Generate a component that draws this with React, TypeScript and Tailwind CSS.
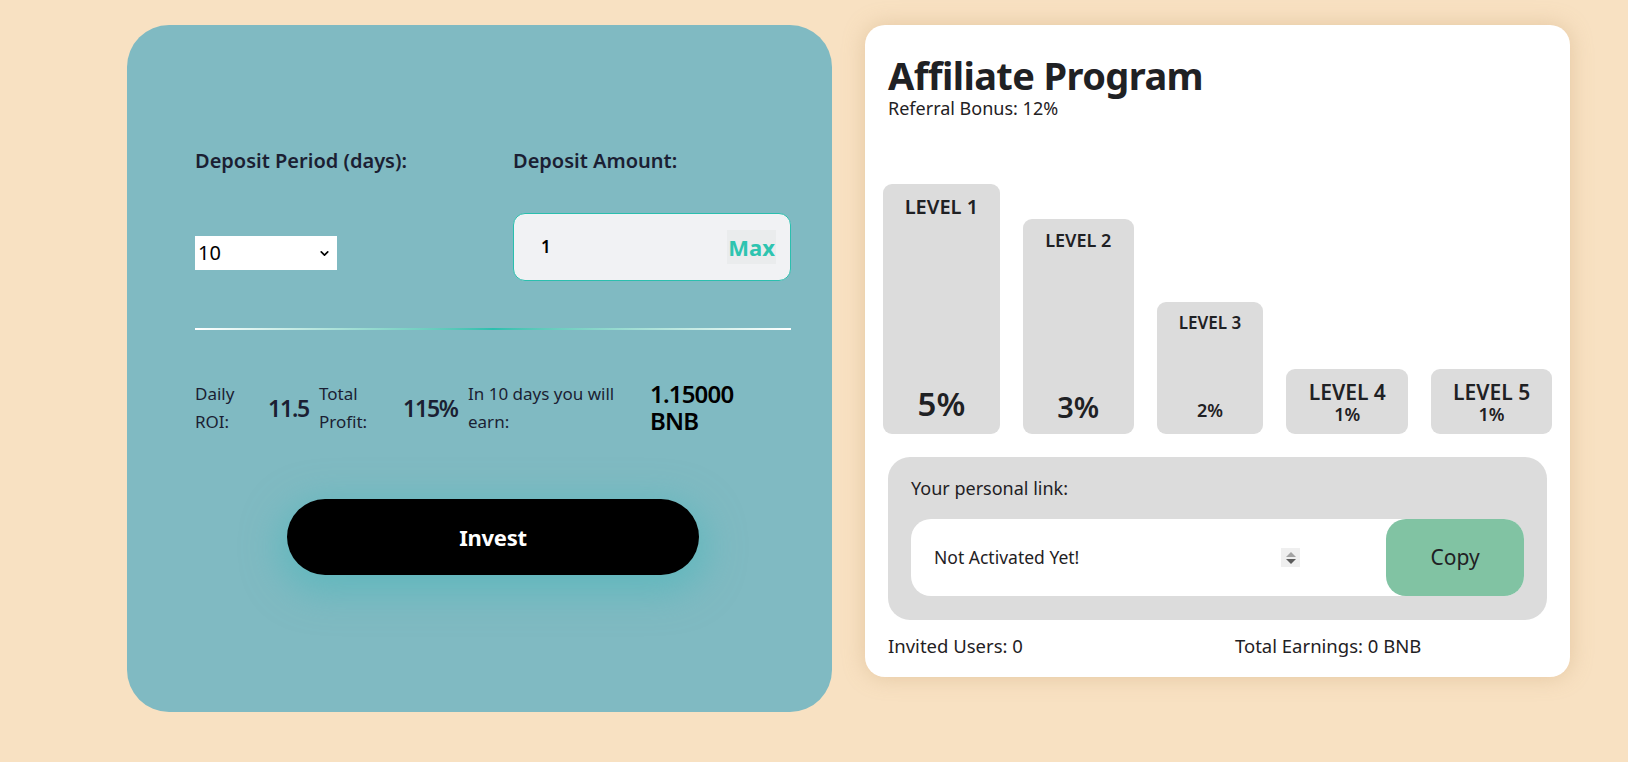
import { ChevronDown } from "lucide-react";

const font = { fontFamily: '"Noto Sans", Roboto, Arial, sans-serif' };

function Level({
  name,
  pct,
  className,
  nameClass,
  pctClass,
}: {
  name: string;
  pct: string;
  className: string;
  nameClass: string;
  pctClass: string;
}) {
  return (
    <div className={`flex flex-col items-center rounded-[9px] bg-[#dcdcdc] text-[#1f2124] ${className}`}>
      <span className={`font-semibold ${nameClass}`}>{name}</span>
      <span className={`font-semibold ${pctClass}`}>{pct}</span>
    </div>
  );
}

function Spinner() {
  return (
    <div className="flex h-[19px] w-[19px] flex-col items-center justify-center gap-[2px] bg-[#efefef]">
      <svg width="10" height="5" viewBox="0 0 10 5">
        <path d="M5 0 L10 5 L0 5 Z" fill="#a3a3a3" />
      </svg>
      <svg width="10" height="5" viewBox="0 0 10 5">
        <path d="M0 0 L10 0 L5 5 Z" fill="#5b5b5b" />
      </svg>
    </div>
  );
}

export default function App() {
  return (
    <div className="min-h-screen bg-[#f8e1c2] pl-[127px] pt-[25px]" style={font}>
      <div className="flex items-start gap-[33px]">
        {/* Invest calculator */}
        <div className="h-[687px] w-[705px] rounded-[42px] bg-[#80bac2] pl-[68px] pr-[41px] pt-[122px] text-[#1b1f33]">
          <div className="flex">
            <div className="w-[318px]">
              <p className="text-[20px] font-semibold leading-[27px]">Deposit Period (days):</p>
              <div className="relative mt-[62px] h-[34px] w-[142px] bg-white">
                <select className="h-full w-full appearance-none bg-transparent pl-[3px] text-[20px] text-black outline-none">
                  <option>10</option>
                  <option>20</option>
                  <option>30</option>
                </select>
                <ChevronDown
                  className="pointer-events-none absolute right-[6px] top-[11px] h-[13px] w-[13px] text-black"
                  strokeWidth={3}
                />
              </div>
            </div>
            <div className="w-[278px]">
              <p className="text-[20px] font-semibold leading-[27px]">Deposit Amount:</p>
              <div className="mt-[39px] flex h-[68px] items-center rounded-[12px] border border-[#2bbfae] bg-[#f1f2f4] pl-[27px] pr-[14px]">
                <span className="flex-1 text-[17px] font-semibold text-black">1</span>
                <span className="bg-[#eaeced] px-[1px] text-[22px] font-bold leading-[34px] text-[#2ec4b0]">Max</span>
              </div>
            </div>
          </div>

          <div className="mt-[47px] h-[2px] w-full bg-gradient-to-r from-white via-[#2bbfae] to-white" />

          <div className="mt-[50px] flex items-center text-[17px] leading-[28px]">
            <div className="w-[73px]">
              Daily
              <br />
              ROI:
            </div>
            <div className="w-[51px] text-[23px] font-semibold tracking-[-1.2px]">11.5</div>
            <div className="w-[84px]">
              Total
              <br />
              Profit:
            </div>
            <div className="w-[65px] text-[23px] font-semibold tracking-[-1.2px]">115%</div>
            <div className="w-[182px] whitespace-nowrap">
              In 10 days you will
              <br />
              earn:
            </div>
            <div className="self-start text-[24px] font-semibold leading-[27px] tracking-[-0.8px] text-black">
              1.15000
              <br />
              BNB
            </div>
          </div>

          <div className="mt-[63px] flex justify-center">
            <button className="h-[76px] w-[412px] rounded-full bg-black text-[22px] font-bold tracking-[-0.3px] text-white shadow-[0_10px_36px_8px_rgba(72,182,186,0.55)]">
              Invest
            </button>
          </div>
        </div>

        {/* Affiliate program */}
        <div className="h-[652px] w-[705px] rounded-[20px] bg-white px-[23px] pt-[26px] shadow-[0_0_22px_rgba(190,150,100,0.35)]">
          <h1 className="text-[38px] font-bold leading-[48px] tracking-[-0.6px] text-[#1f2124]">Affiliate Program</h1>
          <p className="text-[18px] leading-[18px] text-[#1f2124]">Referral Bonus: 12%</p>

          <div className="-mx-[5px] mt-[67px] flex h-[250px] items-end gap-[23px]">
            <Level
              name="LEVEL 1"
              pct="5%"
              className="h-[250px] w-[117px] justify-between pb-[6px] pt-[8px]"
              nameClass="text-[20px]"
              pctClass="text-[33px]"
            />
            <Level
              name="LEVEL 2"
              pct="3%"
              className="h-[215px] w-[111px] justify-between pb-[6px] pt-[8px]"
              nameClass="text-[18px]"
              pctClass="text-[29px]"
            />
            <Level
              name="LEVEL 3"
              pct="2%"
              className="h-[132px] w-[107px] justify-between pb-[10px] pt-[8px]"
              nameClass="text-[17px]"
              pctClass="text-[18px]"
            />
            <Level
              name="LEVEL 4"
              pct="1%"
              className="h-[65px] w-[122px] justify-center"
              nameClass="text-[21px] leading-[24px]"
              pctClass="text-[18px] leading-[20px]"
            />
            <Level
              name="LEVEL 5"
              pct="1%"
              className="h-[65px] w-[121px] justify-center"
              nameClass="text-[21px] leading-[24px]"
              pctClass="text-[18px] leading-[20px]"
            />
          </div>

          <div className="mt-[23px] h-[163px] rounded-[22px] bg-[#dcdcdc] px-[23px] pt-[19px]">
            <p className="text-[18px] leading-[24px] text-[#1f2124]">Your personal link:</p>
            <div className="mt-[19px] flex h-[77px] items-center rounded-[20px] bg-white">
              <div className="flex flex-1 items-center pl-[23px] pr-[86px]">
                <span className="flex-1 text-[17.5px] text-[#1f2124]">Not Activated Yet!</span>
                <Spinner />
              </div>
              <button className="h-full w-[138px] rounded-[20px] bg-[#81c3a3] text-[21px] text-[#1f2124]">Copy</button>
            </div>
          </div>

          <div className="mt-[12px] flex text-[18.5px] text-[#1f2124]">
            <span className="w-[347px]">Invited Users: 0</span>
            <span>Total Earnings: 0 BNB</span>
          </div>
        </div>
      </div>
    </div>
  );
}
